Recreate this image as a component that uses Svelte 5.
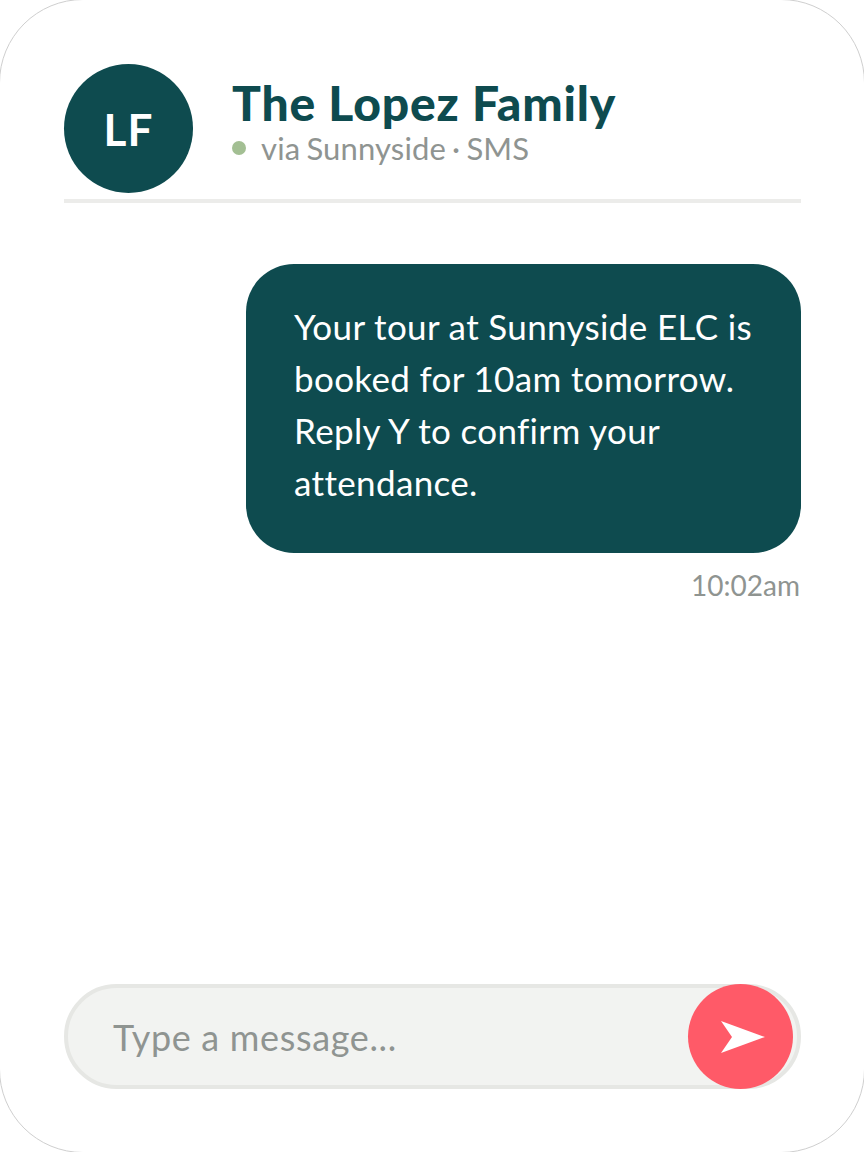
<script lang="ts">
	const bubbleLines = [
		'Your tour at Sunnyside ELC is',
		'booked for 10am tomorrow.',
		'Reply Y to confirm your',
		'attendance.'
	];
</script>

<div class="sms-card">
	<header class="sms-head">
		<div class="sms-head__avatar">LF</div>
		<div class="sms-head__info">
			<div class="sms-head__name">The Lopez Family</div>
			<div class="sms-head__meta">
				<span class="sms-head__dot"></span>
				<span>via Sunnyside · SMS</span>
			</div>
		</div>
	</header>

	<main class="sms-thread">
		<div class="sms-bubble">
			{#each bubbleLines as line}
				<div>{line}</div>
			{/each}
		</div>
		<div class="sms-time">10:02am</div>
	</main>

	<div class="sms-input">
		<span class="sms-input__hint">Type a message...</span>
		<button type="button" class="sms-input__send" aria-label="Send">
			<svg width="46" height="34" viewBox="0 0 46 34">
				<path d="M1 1 L45 17 L1 33 L12 17 Z" fill="#fff" />
			</svg>
		</button>
	</div>
</div>

<style>
	:global(body) {
		background: #fff;
		overflow: hidden;
	}
	.sms-card {
		box-sizing: border-box;
		width: 866px;
		height: 1154px;
		margin: -1px;
		padding: 64px 63px 63px 64px;
		border: 1px solid #cfcfcf;
		border-radius: 84px;
		background: #fff;
		display: flex;
		flex-direction: column;
		font-family: Lato, "Noto Sans", sans-serif;
	}
	.sms-head {
		display: flex;
		align-items: flex-start;
		gap: 39px;
		height: 135px;
		border-bottom: 4px solid #ececea;
	}
	.sms-head__avatar {
		width: 129px;
		height: 129px;
		border-radius: 50%;
		background: #0e4b4f;
		color: #fff;
		font-size: 44px;
		font-weight: 700;
		letter-spacing: 1px;
		display: flex;
		align-items: center;
		justify-content: center;
	}
	.sms-head__info {
		padding-top: 11px;
	}
	.sms-head__name {
		color: #0e4b4f;
		font-size: 48px;
		font-weight: 900;
		letter-spacing: 0.85px;
		line-height: 56px;
	}
	.sms-head__meta {
		display: flex;
		align-items: center;
		gap: 15px;
		color: #8f9491;
		font-size: 31px;
		letter-spacing: 0.15px;
		word-spacing: -2px;
		line-height: 36px;
		margin-top: -1px;
	}
	.sms-head__dot {
		width: 14px;
		height: 14px;
		border-radius: 50%;
		background: #a3bf93;
	}
	.sms-thread {
		flex: 1;
		display: flex;
		flex-direction: column;
		align-items: flex-end;
		padding-top: 61px;
	}
	.sms-bubble {
		box-sizing: border-box;
		width: 555px;
		height: 289px;
		padding: 36px 48px;
		border-radius: 48px;
		background: #0e4b4f;
		color: #fff;
		font-size: 35px;
		letter-spacing: 0.35px;
		line-height: 52px;
		white-space: nowrap;
	}
	.sms-time {
		margin: 16px 1px 0 0;
		color: #8f9491;
		font-size: 28px;
		line-height: 32px;
	}
	.sms-input {
		box-sizing: border-box;
		height: 105px;
		display: flex;
		align-items: center;
		justify-content: space-between;
		padding-left: 45px;
		border: 4px solid #e6e7e4;
		border-radius: 53px;
		background: #f2f3f1;
		position: relative;
	}
	.sms-input__hint {
		color: #8f9491;
		font-size: 36px;
		letter-spacing: 0.65px;
	}
	.sms-input__send {
		position: absolute;
		right: 4px;
		top: -4px;
		width: 105px;
		height: 105px;
		padding: 0 0 0 4px;
		border: 0;
		border-radius: 50%;
		background: #ff5a68;
		display: flex;
		align-items: center;
		justify-content: center;
	}
</style>
